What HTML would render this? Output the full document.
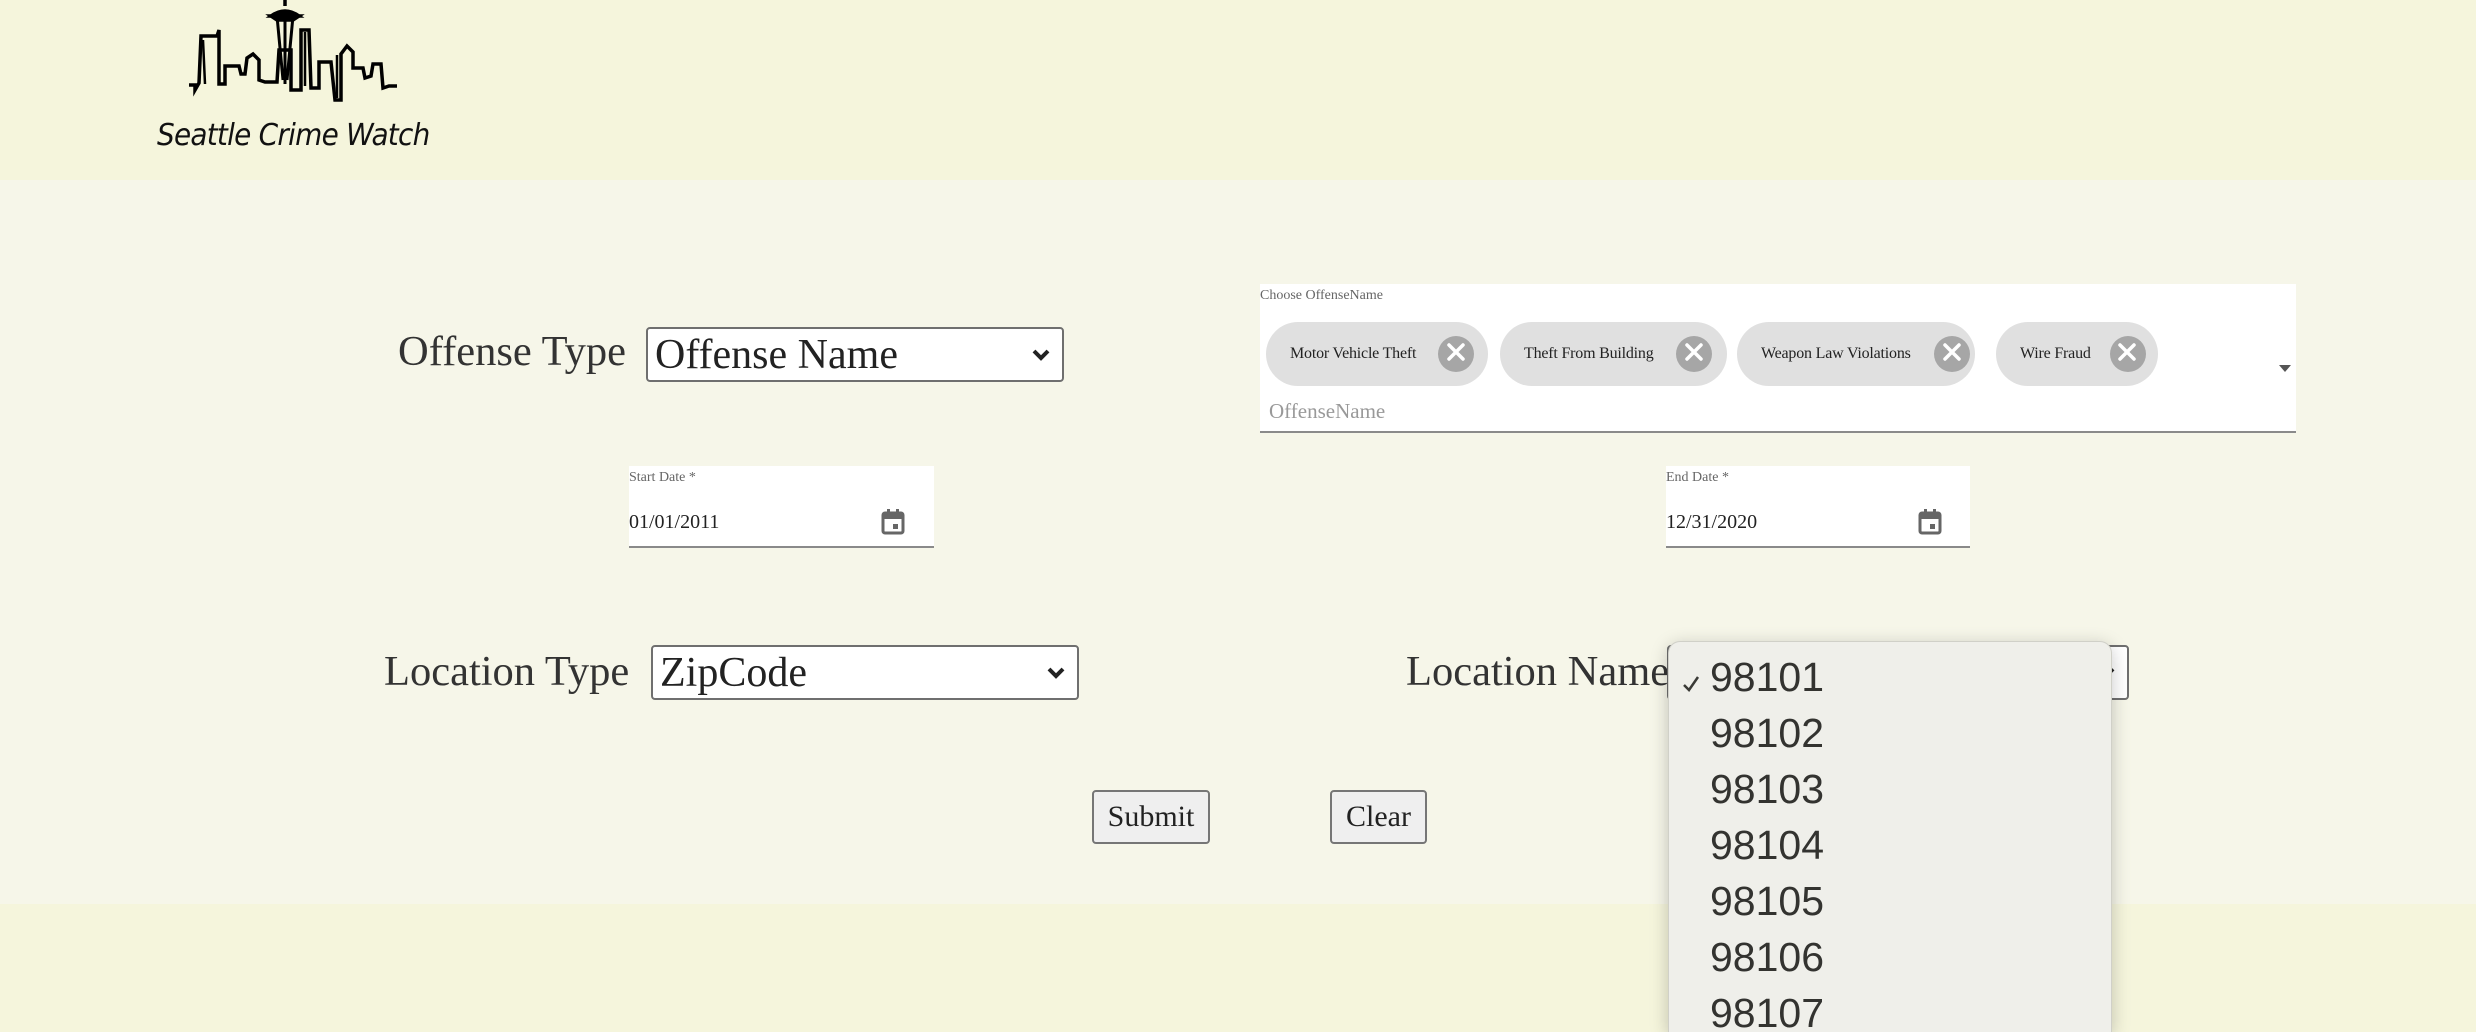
<!DOCTYPE html>
<html><head><meta charset="utf-8"><style>
*{box-sizing:border-box;margin:0;padding:0}
html,body{width:2476px;height:1032px;overflow:hidden;background:#f5f5dc;font-family:"Liberation Serif",serif;color:#333}
.hdr{position:absolute;left:0;top:0;width:2476px;height:180px;background:#f5f5dc}
.mid{position:absolute;left:0;top:180px;width:2476px;height:724px;background:#f6f6e9}
.abs{position:absolute}
.lbl{position:absolute;font-size:42.5px;line-height:1;color:#333;white-space:nowrap}
.sel{position:absolute;background:#fff;border:2px solid #6f6f6f;border-radius:4px;font-size:42px;color:#222;padding-left:7px;line-height:52px}
.sel svg{position:absolute;right:10px;top:18px}
.box{position:absolute;background:#fff}
.chip{position:absolute;top:38px;height:64px;background:#e0e0e0;border-radius:32px;font-size:16px;letter-spacing:-0.2px;color:#222;line-height:64px;padding-left:24px;white-space:nowrap}
.chip .x{position:absolute;top:14px;width:36px;height:36px;border-radius:50%;background:#a6a6a6}
.small{font-size:14px;color:#666;position:absolute}
.btn{position:absolute;background:#efefef;border:2px solid #767676;border-radius:4px;font-size:30px;color:#222;text-align:center;line-height:49px}
.pop{position:absolute;left:1668px;top:641px;width:444px;height:391px;background:#efefea;border-radius:12px 12px 0 0;box-shadow:0 4px 18px rgba(0,0,0,.22);border:1px solid #d0d0c8;border-bottom:none;overflow:hidden}
.pop div{position:absolute;left:41px;font-family:"Liberation Sans",sans-serif;font-size:41px;color:#333330}
</style></head><body>
<div class="hdr"></div>
<div class="mid"></div>

<svg class="abs" style="left:187px;top:0" width="220" height="105" viewBox="0 0 220 105" fill="none" stroke="#000" stroke-width="3.5" stroke-linejoin="miter">
<path d="M2 85 L8 85 L8 90 L12 83 L14 36 L30 36 L32 30 L32 84 L38 84 L38 66 L52 66 L54 74 L58 74 L60 58 L66 54 L72 60 L72 80 L78 82 L90 82 L92 50 L104 50 L104 90 L114 90 L114 30 L122 30 L124 88 L132 88 L132 62 L144 62 L148 100 L154 100 L154 54 L160 46 L166 52 L166 68 L176 68 L178 78 L184 76 L186 64 L194 64 L196 88 L202 86 L210 86"/>
<path d="M16 40 L18 84 M150 55 L150 98 M118 32 L118 86" stroke-width="2.5"/>
<path d="M98 0 L98 6 M84 16 Q98 6 112 16 Z" fill="#000"/>
<path d="M90 16 L96 80 M106 16 L100 80 M98 16 L98 84" stroke-width="3"/>
<path d="M84 16 L112 16 L106 20 L90 20 Z" fill="#000"/>
</svg>
<div class="abs" style="left:157px;top:118px;font-family:'DejaVu Sans',sans-serif;font-style:italic;font-size:30px;color:#111;letter-spacing:-0.8px;transform:scaleX(0.93);transform-origin:left">Seattle Crime Watch</div>

<div class="lbl" style="left:398px;top:331px">Offense Type</div>
<div class="sel" style="left:646px;top:327px;width:418px;height:55px">Offense Name
<svg width="22" height="16" viewBox="0 0 22 16"><path d="M4 4 L11 11 L18 4" stroke="#222" stroke-width="4" fill="none"/></svg></div>

<div class="box" style="left:1260px;top:284px;width:1036px;height:149px;border-bottom:2px solid #8a8a8a">
<div class="small" style="left:0;top:4px">Choose OffenseName</div>
<div class="chip" style="left:6px;width:222px">Motor Vehicle Theft<div class="x" style="left:172px"></div></div>
<div class="chip" style="left:240px;width:227px">Theft From Building<div class="x" style="left:176px"></div></div>
<div class="chip" style="left:477px;width:238px">Weapon Law Violations<div class="x" style="left:197px"></div></div>
<div class="chip" style="left:736px;width:162px">Wire Fraud<div class="x" style="left:114px"></div></div>
<div class="abs" style="left:1019px;top:81px;width:0;height:0;border-left:6px solid transparent;border-right:6px solid transparent;border-top:7px solid #555"></div>
<div class="abs" style="left:9px;top:115px;font-size:21px;color:#999">OffenseName</div>
</div>

<div class="box" style="left:629px;top:466px;width:305px;height:82px;border-bottom:2px solid #8a8a8a">
<div class="small" style="left:0;top:4px">Start Date *</div>
<div class="abs" style="left:0;top:45px;font-size:20px;color:#222">01/01/2011</div>
<svg class="abs" style="left:252px;top:43px" width="24" height="26" viewBox="0 0 24 26"><rect x="2" y="4" width="20" height="20" rx="2" fill="none" stroke="#666" stroke-width="3"/><rect x="2" y="4" width="20" height="6" fill="#666"/><rect x="6" y="0" width="3" height="5" fill="#666"/><rect x="15" y="0" width="3" height="5" fill="#666"/><rect x="12" y="15" width="5" height="5" fill="#666"/></svg>
</div>
<div class="box" style="left:1666px;top:466px;width:304px;height:82px;border-bottom:2px solid #8a8a8a">
<div class="small" style="left:0;top:4px">End Date *</div>
<div class="abs" style="left:0;top:45px;font-size:20px;color:#222">12/31/2020</div>
<svg class="abs" style="left:252px;top:43px" width="24" height="26" viewBox="0 0 24 26"><rect x="2" y="4" width="20" height="20" rx="2" fill="none" stroke="#666" stroke-width="3"/><rect x="2" y="4" width="20" height="6" fill="#666"/><rect x="6" y="0" width="3" height="5" fill="#666"/><rect x="15" y="0" width="3" height="5" fill="#666"/><rect x="12" y="15" width="5" height="5" fill="#666"/></svg>
</div>

<div class="lbl" style="left:384px;top:651px">Location Type</div>
<div class="sel" style="left:651px;top:645px;width:428px;height:55px">ZipCode
<svg width="22" height="16" viewBox="0 0 22 16"><path d="M4 4 L11 11 L18 4" stroke="#222" stroke-width="4" fill="none"/></svg></div>

<div class="lbl" style="left:1406px;top:651px">Location Name</div>
<div class="sel" style="left:1667px;top:645px;width:462px;height:55px">
<svg width="22" height="16" viewBox="0 0 22 16"><path d="M4 4 L11 11 L18 4" stroke="#222" stroke-width="4" fill="none"/></svg></div>

<div class="btn" style="left:1092px;top:790px;width:118px;height:54px">Submit</div>
<div class="btn" style="left:1330px;top:790px;width:97px;height:54px">Clear</div>

<div class="pop">
<svg class="abs" style="left:12px;top:32px" width="20" height="20" viewBox="0 0 20 20"><path d="M3 11 L8 16 L17 3" stroke="#3a3a36" stroke-width="2.5" fill="none"/></svg>
<div style="top:12px">98101</div>
<div style="top:68px">98102</div>
<div style="top:124px">98103</div>
<div style="top:180px">98104</div>
<div style="top:236px">98105</div>
<div style="top:292px">98106</div>
<div style="top:348px">98107</div>
</div>

<svg class="abs" style="left:0;top:0;pointer-events:none" width="2476" height="1032">
<g stroke="#fff" stroke-width="3.5" stroke-linecap="round">
<path d="M1449 345 L1463 359 M1463 345 L1449 359"/>
<path d="M1687 345 L1701 359 M1701 345 L1687 359"/>
<path d="M1945 345 L1959 359 M1959 345 L1945 359"/>
<path d="M2120 345 L2134 359 M2134 345 L2120 359"/>
</g></svg>
</body></html>
